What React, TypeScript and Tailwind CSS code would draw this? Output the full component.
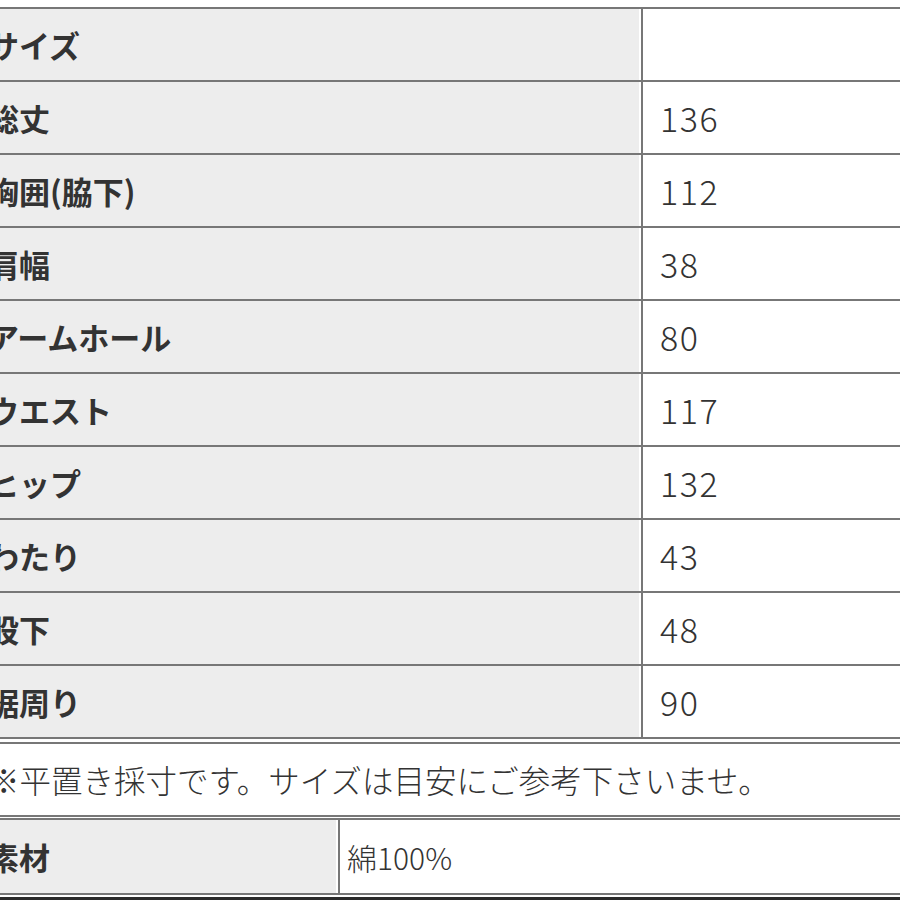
import React from "react";

const rows: [string, string][] = [
  ["サイズ", ""],
  ["総丈", "136"],
  ["胸囲(脇下)", "112"],
  ["肩幅", "38"],
  ["アームホール", "80"],
  ["ウエスト", "117"],
  ["ヒップ", "132"],
  ["わたり", "43"],
  ["股下", "48"],
  ["裾周り", "90"],
];

export default function App() {
  return (
    <div
      className="w-[900px] h-[900px] bg-white overflow-hidden text-[#333]"
      style={{ fontFamily: '"Noto Sans CJK JP", "Noto Sans", sans-serif' }}
    >
      <div className="ml-[-20px] w-[940px] pt-[7px]">
        <div className="border-t-2 border-[#777]">
          {rows.map(([label, value]) => (
            <div key={label} className="flex h-[73px] border-b-2 border-[#777]">
              <div className="w-[661px] shrink-0 bg-[#ededed] border-r-2 border-white flex items-center pl-[8px] text-[31px] font-bold leading-none">
                {label}
              </div>
              <div className="flex-1 border-l-2 border-[#777] flex items-center pl-[17px] text-[34px] tracking-[1.5px] font-light leading-none">
                {value}
              </div>
            </div>
          ))}
        </div>
        <div className="mt-[3px] border-t-2 border-b-2 border-[#777] h-[75px] flex items-center pl-[8px] text-[31.5px] font-light leading-none">
          ※平置き採寸です。サイズは目安にご参考下さいませ。
        </div>
        <div className="mt-[1px] border-t-2 border-b-2 border-[#777] h-[77px] flex">
          <div className="w-[358px] shrink-0 bg-[#ededed] border-r-2 border-white flex items-center pl-[8px] text-[31px] font-bold leading-none">
            素材
          </div>
          <div className="flex-1 border-l-2 border-[#777] flex items-center pl-[7px] text-[30px] font-light leading-none">
            綿100%
          </div>
        </div>
        <div className="mt-[2px] h-[4px] bg-[#2a2a2a]" />
      </div>
    </div>
  );
}
